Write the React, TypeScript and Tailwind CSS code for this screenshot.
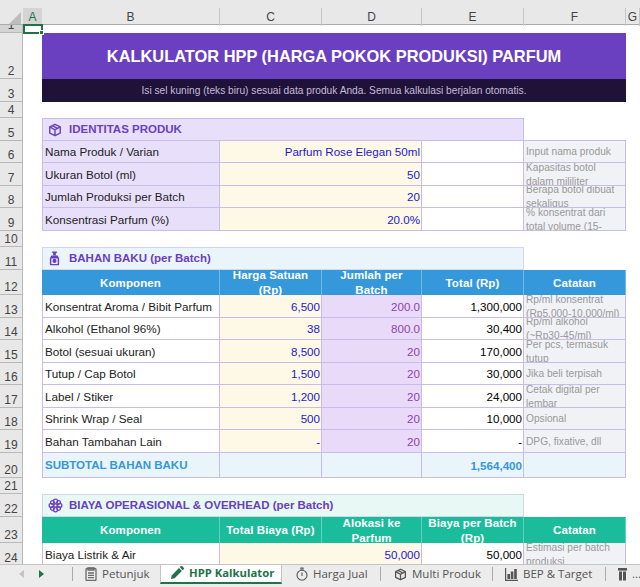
import { ReactNode } from 'react';

const line = 'border-[#c8bce8]';

const RowRow = ({ n, h, children }: { n: number; h: string; children?: ReactNode }) => (
  <div className={`grid grid-cols-[23px_19px_178px_102px_100px_102px_102px_14px] ${h}`}>
    <div
      className={`flex items-end justify-center overflow-hidden border-r border-b border-[#b8b8b8] text-[12px] leading-[13px] text-[#444] ${
        n === 1 ? 'bg-[#d4d4d4]' : 'bg-[#e8e8e8]'
      }`}
    >
      {n}
    </div>
    <div />
    {children}
  </div>
);

type CellProps = {
  children?: ReactNode;
  className?: string;
};

const Cell = ({ children, className = '' }: CellProps) => (
  <div className={`flex items-center overflow-hidden border-r border-b ${line} ${className}`}>{children}</div>
);

const Label = ({ children, bg = 'bg-white' }: { children: ReactNode; bg?: string }) => (
  <Cell className={`border-l pt-[1px] pl-[2px] text-[11.7px] text-[#222] ${bg}`}>
    <span className="truncate">{children}</span>
  </Cell>
);

const Num = ({ children, className = '' }: CellProps) => (
  <Cell className={`justify-end pt-[1px] pr-[1px] text-[11.6px] ${className}`}>{children}</Cell>
);

const Note = ({ children }: { children?: ReactNode }) => (
  <Cell className="bg-[#f0f2f5] pt-[1px] pl-[2px] text-[10.2px] leading-[14px] text-[#999]">
    <span className="block w-full">{children}</span>
  </Cell>
);

const HeadCell = ({ children, className = '' }: CellProps) => (
  <div
    className={`flex items-center justify-center overflow-hidden border-r border-[#ffffff50] px-[3px] pt-[1px] text-center text-[11.5px] leading-[15px] font-bold tracking-[0.1px] text-white ${className}`}
  >
    <span className="block w-full">{children}</span>
  </div>
);

const Section = ({ icon, title, bg, tone }: { icon: ReactNode; title: string; bg: string; tone: string }) => (
  <div className={`col-span-4 flex items-center border ${tone} ${bg} pl-[5px]`}>
    <span className="flex w-[21px] text-[#6a3fc0]">{icon}</span>
    <span className="text-[11.5px] font-bold text-[#6a3fc0]">{title}</span>
  </div>
);

const BoxIcon = ({ className = 'h-3.5 w-3.5' }: { className?: string }) => (
  <svg viewBox="0 0 16 16" fill="none" stroke="currentColor" strokeWidth="1.6" className={className}>
    <path d="M8 1.5 14 4.5v7L8 14.5 2 11.5v-7z" strokeLinejoin="round" />
    <path d="M2.5 4.8 8 7.8l5.5-3M8 7.8v6.4M5 3l5.8 3.2" />
  </svg>
);

const BottleIcon = () => (
  <svg viewBox="0 0 14 16" className="h-[15px] w-[13px]" fill="currentColor">
    <rect x="4.5" y="0.5" width="5" height="1.6" />
    <rect x="5.5" y="2.1" width="3" height="2.6" />
    <path d="M3.6 4.8h6.8l1.6 3v6.5a1 1 0 0 1-1 1H3a1 1 0 0 1-1-1V7.8zM3.6 8v5.8h6.8V8z" fillRule="evenodd" />
    <circle cx="7" cy="10.6" r="2.2" />
  </svg>
);

const FlowerIcon = () => (
  <svg viewBox="0 0 16 16" className="h-[15px] w-[15px]" fill="none" stroke="currentColor" strokeWidth="1.3">
    <circle cx="8" cy="8" r="1.8" />
    <circle cx="8" cy="3.4" r="2.2" />
    <circle cx="8" cy="12.6" r="2.2" />
    <circle cx="3.4" cy="8" r="2.2" />
    <circle cx="12.6" cy="8" r="2.2" />
    <circle cx="4.7" cy="4.7" r="2" />
    <circle cx="11.3" cy="4.7" r="2" />
    <circle cx="4.7" cy="11.3" r="2" />
    <circle cx="11.3" cy="11.3" r="2" />
  </svg>
);

const ClipIcon = () => (
  <svg viewBox="0 0 12 14" className="h-[14px] w-[12px] shrink-0" fill="none" stroke="#6b6b6b" strokeWidth="1.3">
    <rect x="1" y="1.5" width="10" height="12" rx="1" />
    <path d="M3 1h6v2H3zM3 6h6M3 8.3h6M3 10.6h6" />
  </svg>
);

const PencilIcon = () => (
  <svg viewBox="0 0 14 14" className="h-[14px] w-[14px] shrink-0" fill="#217346">
    <path d="M1 13l.7-3.6L9 2.1l2.9 2.9-7.3 7.3z" />
    <path d="M9.8 1.3l1-1a1 1 0 0 1 1.4 0l1.5 1.5a1 1 0 0 1 0 1.4l-1 1z" />
  </svg>
);

const WatchIcon = () => (
  <svg viewBox="0 0 12 14" className="h-[14px] w-[12px] shrink-0" fill="none" stroke="#555" strokeWidth="1.1">
    <circle cx="6" cy="8.2" r="5" />
    <path d="M4.3 1h3.4M4.8 1l.4 2.2M7.2 1l-.4 2.2M6 5.5v3.5" />
  </svg>
);

const ChartIcon = () => (
  <svg viewBox="0 0 13 13" className="h-[13px] w-[13px] shrink-0" fill="#555">
    <path d="M0 0h1.2v11.8H13V13H0z" />
    <rect x="2.4" y="6" width="2.6" height="5" />
    <rect x="5.8" y="3.5" width="2.6" height="7.5" />
    <rect x="9.2" y="1" width="2.6" height="10" />
  </svg>
);

const GiftIcon = () => (
  <svg viewBox="0 0 9 14" className="h-[14px] w-[9px] shrink-0" fill="#555">
    <rect x="0" y="1" width="9" height="2.6" />
    <rect x="1" y="4.5" width="3" height="9" />
    <rect x="5" y="4.5" width="3" height="9" />
  </svg>
);

const Tab = ({ icon, label, className = '' }: { icon: ReactNode; label: string; className?: string }) => (
  <div className={`flex shrink-0 items-center gap-[5px] text-[11.5px] whitespace-nowrap text-[#555] ${className}`}>
    {icon}
    <span>{label}</span>
  </div>
);

const Sep = () => <div className="h-[14px] w-px shrink-0 bg-[#aaa]" />;

const materials = [
  { n: 13, h: 'h-[23px]', name: 'Konsentrat Aroma / Bibit Parfum', price: '6,500', qty: '200.0', total: '1,300,000', note: 'Rp/ml konsentrat (Rp5.000-10.000/ml)' },
  { n: 14, h: 'h-[22px]', name: 'Alkohol (Ethanol 96%)', price: '38', qty: '800.0', total: '30,400', note: 'Rp/ml alkohol (~Rp30-45/ml)' },
  { n: 15, h: 'h-[23px]', name: 'Botol (sesuai ukuran)', price: '8,500', qty: '20', total: '170,000', note: 'Per pcs, termasuk tutup' },
  { n: 16, h: 'h-[22px]', name: 'Tutup / Cap Botol', price: '1,500', qty: '20', total: '30,000', note: 'Jika beli terpisah' },
  { n: 17, h: 'h-[23px]', name: 'Label / Stiker', price: '1,200', qty: '20', total: '24,000', note: 'Cetak digital per lembar' },
  { n: 18, h: 'h-[22px]', name: 'Shrink Wrap / Seal', price: '500', qty: '20', total: '10,000', note: 'Opsional' },
  { n: 19, h: 'h-[23px]', name: 'Bahan Tambahan Lain', price: '-', qty: '20', total: '-', note: 'DPG, fixative, dll' },
];

const identity = [
  { n: 6, h: 'h-[22px]', name: 'Nama Produk / Varian', value: 'Parfum Rose Elegan 50ml', note: 'Input nama produk' },
  { n: 7, h: 'h-[23px]', name: 'Ukuran Botol (ml)', value: '50', note: 'Kapasitas botol dalam mililiter' },
  { n: 8, h: 'h-[22px]', name: 'Jumlah Produksi per Batch', value: '20', note: 'Berapa botol dibuat sekaligus' },
  { n: 9, h: 'h-[23px]', name: 'Konsentrasi Parfum (%)', value: '20.0%', note: '% konsentrat dari total volume (15-' },
];

const blueHead = ['Komponen', 'Harga Satuan (Rp)', 'Jumlah per Batch', 'Total (Rp)', 'Catatan'];
const tealHead = ['Komponen', 'Total Biaya (Rp)', 'Alokasi ke Parfum', 'Biaya per Batch (Rp)', 'Catatan'];

export default function App() {
  return (
    <div className="relative flex h-[587px] w-[640px] flex-col overflow-hidden bg-white font-['Liberation_Sans',Arial,sans-serif]">
      {/* column letters */}
      <div className="grid h-[25px] grid-cols-[23px_19px_178px_102px_100px_102px_102px_14px] border-b border-[#ababab] bg-[#e8e8e8] pt-[8px] text-[12px] text-[#444]">
        <div className="flex items-end justify-end pr-[2px] pb-[2px]">
          <svg viewBox="0 0 12 12" className="h-[12px] w-[12px]" fill="#bdbdbd">
            <path d="M12 0v12H0z" />
          </svg>
        </div>
        <div className="flex items-center justify-center bg-[#d4d4d4] text-[#217346]">A</div>
        {['B', 'C', 'D', 'E', 'F', 'G'].map((col) => (
          <div key={col} className="flex items-center justify-center border-r border-[#c6c6c6]">
            {col}
          </div>
        ))}
      </div>

      <div className="flex-1 overflow-hidden">
        <RowRow n={1} h="h-[8px]" />
        <RowRow n={2} h="h-[46px]">
          <div className="col-span-5 flex items-center justify-center bg-[#6a3fc0] pt-[1px] text-[16.4px] font-bold text-white">
            KALKULATOR HPP (HARGA POKOK PRODUKSI) PARFUM
          </div>
        </RowRow>
        <RowRow n={3} h="h-[23px]">
          <div className="col-span-5 flex items-center justify-center bg-[#1e1238] text-[10.2px] text-[#c4bcd8]">
            Isi sel kuning (teks biru) sesuai data produk Anda. Semua kalkulasi berjalan otomatis.
          </div>
        </RowRow>
        <RowRow n={4} h="h-[16px]" />
        <RowRow n={5} h="h-[23px]">
          <Section icon={<BoxIcon />} title="IDENTITAS PRODUK" bg="bg-[#e8e0fb]" tone="border-[#c8bce8]" />
          <div className={`border-b ${line}`} />
        </RowRow>
        {identity.map((row) => (
          <RowRow key={row.n} n={row.n} h={row.h}>
            <Label bg="bg-[#e8e0fb]">{row.name}</Label>
            <Num className="col-span-2 bg-[#fef8e7] text-[#1a1ad0]">{row.value}</Num>
            <Cell />
            <Note>{row.note}</Note>
          </RowRow>
        ))}
        <RowRow n={10} h="h-[16px]" />
        <RowRow n={11} h="h-[23px]">
          <Section icon={<BottleIcon />} title="BAHAN BAKU (per Batch)" bg="bg-[#eaf4fb]" tone="border-[#d0d8ec]" />
        </RowRow>
        <RowRow n={12} h="h-[25px]">
          {blueHead.map((title) => (
            <HeadCell key={title} className="bg-[#3498db]">
              {title}
            </HeadCell>
          ))}
        </RowRow>
        {materials.map((row) => (
          <RowRow key={row.n} n={row.n} h={row.h}>
            <Label>{row.name}</Label>
            <Num className="bg-[#fef8e7] text-[#1a1ad0]">{row.price}</Num>
            <Num className="bg-[#e8daf8] text-[#8e44ad]">{row.qty}</Num>
            <Num className="bg-white text-black">{row.total}</Num>
            <Note>{row.note}</Note>
          </RowRow>
        ))}
        <RowRow n={20} h="h-[25px]">
          <Cell className="border-l bg-[#eaf4fb] pt-[1px] pl-[2px] text-[11.5px] font-bold text-[#3498db]">SUBTOTAL BAHAN BAKU</Cell>
          <Cell className="bg-[#eaf4fb]" />
          <Cell className="bg-[#eaf4fb]" />
          <Num className="bg-[#eaf4fb] font-bold text-[#3498db]">1,564,400</Num>
          <Cell className="bg-[#eaf4fb]" />
        </RowRow>
        <RowRow n={21} h="h-[16px]" />
        <RowRow n={22} h="h-[23px]">
          <Section
            icon={<FlowerIcon />}
            title="BIAYA OPERASIONAL & OVERHEAD (per Batch)"
            bg="bg-[#e8f8f5]"
            tone="border-[#d0d8e4]"
          />
        </RowRow>
        <RowRow n={23} h="h-[26px]">
          {tealHead.map((title) => (
            <HeadCell key={title} className="bg-[#1abc9c]">
              {title}
            </HeadCell>
          ))}
        </RowRow>
        <RowRow n={24} h="h-[23px]">
          <Label>Biaya Listrik &amp; Air</Label>
          <Num className="col-span-2 bg-[#fef8e7] text-[#1a1ad0]">50,000</Num>
          <Num className="bg-white text-black">50,000</Num>
          <Note>Estimasi per batch produksi</Note>
        </RowRow>
      </div>

      {/* selected A1 cell */}
      <div className="absolute top-[24px] left-[23px] h-[10px] w-[20px] border-2 border-[#217346]">
        <div className="absolute -right-[3px] -bottom-[3px] h-[5px] w-[5px] border border-white bg-[#217346]" />
      </div>

      {/* sheet tabs */}
      <div className="flex h-[23px] shrink-0 items-start border-t border-[#c4c4c4] bg-[#ececec] pb-[4px]">
        <div className="flex h-[18px] w-[72px] shrink-0 items-center pl-[19px]">
          <span className="h-0 w-0 border-y-[4px] border-r-[5px] border-y-transparent border-r-[#c4c4c4]" />
          <span className="ml-[15px] h-0 w-0 border-y-[4px] border-l-[5px] border-y-transparent border-l-[#217346]" />
        </div>
        <div className="flex h-[18px] items-center font-['Open_Sans',sans-serif]">
          <Sep />
          <Tab icon={<ClipIcon />} label="Petunjuk" className="ml-[12px] w-[75px]" />
          <div className="flex h-[19px] w-[122px] shrink-0 items-center gap-[5px] border-x border-b-2 border-[#c4c4c4] border-b-[#217346] bg-white pl-[9px] text-[11.3px] font-bold whitespace-nowrap text-[#217346]">
            <PencilIcon />
            <span>HPP Kalkulator</span>
          </div>
          <Tab icon={<WatchIcon />} label="Harga Jual" className="ml-[14px] w-[84px]" />
          <Sep />
          <Tab icon={<BoxIcon className="h-[13px] w-[13px] shrink-0 text-[#555]" />} label="Multi Produk" className="ml-[13px] w-[98px]" />
          <Sep />
          <Tab icon={<ChartIcon />} label="BEP & Target" className="ml-[12px] w-[100px]" />
          <Sep />
          <Tab icon={<GiftIcon />} label="..." className="ml-[12px]" />
        </div>
      </div>
    </div>
  );
}
